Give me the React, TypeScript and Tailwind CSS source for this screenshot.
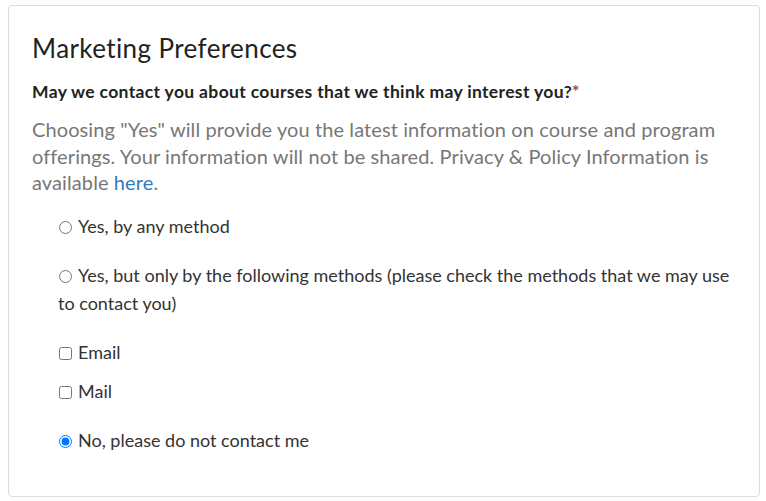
export default function App() {
  return (
    <div className="min-h-[501px] bg-white pl-[8px] pt-[5px] font-['Lato','Open_Sans',sans-serif]">
      <div className="h-[492px] w-[752px] rounded-[4px] border border-[#dddddd] px-[23px] pt-[27px]">
        <h2 className="text-[26px] leading-[30px] font-normal tracking-[0.4px] text-[#222]">Marketing Preferences</h2>
        <p className="mt-[17px] text-[17.5px] leading-[24px] font-bold tracking-[0.35px] text-[#222]">
          May we contact you about courses that we think may interest you?
          <span className="text-[#a94442]">*</span>
        </p>
        <p className="mt-[12px] text-[20px] leading-[26.5px] tracking-[0.1px] text-[#777]">
          Choosing "Yes" will provide you the latest information on course and program offerings. Your
          information will not be shared. Privacy &amp; Policy Information is available{" "}
          <a href="#" className="text-[#337ab7]">
            here
          </a>
          .
        </p>
        <div className="mt-[16.5px] flex flex-col pl-[26px] text-[18px] leading-[28px] text-[#333]">
          <label className="block">
            <input type="radio" name="contact" className="ml-px mr-[6px] align-[-1px]" />
            Yes, by any method
          </label>
          <label className="mt-[21px] block">
            <input type="radio" name="contact" className="ml-px mr-[6px] align-[-1px]" />
            Yes, but only by the following methods (please check the methods that we may use to contact you)
          </label>
          <label className="mt-[21px] block">
            <input type="checkbox" className="ml-px mr-[6px] align-[-1px]" />
            Email
          </label>
          <label className="mt-[11px] block">
            <input type="checkbox" className="ml-px mr-[6px] align-[-1px]" />
            Mail
          </label>
          <label className="mt-[21px] block">
            <input type="radio" name="contact" defaultChecked className="ml-px mr-[6px] align-[-1px]" />
            No, please do not contact me
          </label>
        </div>
      </div>
    </div>
  );
}
